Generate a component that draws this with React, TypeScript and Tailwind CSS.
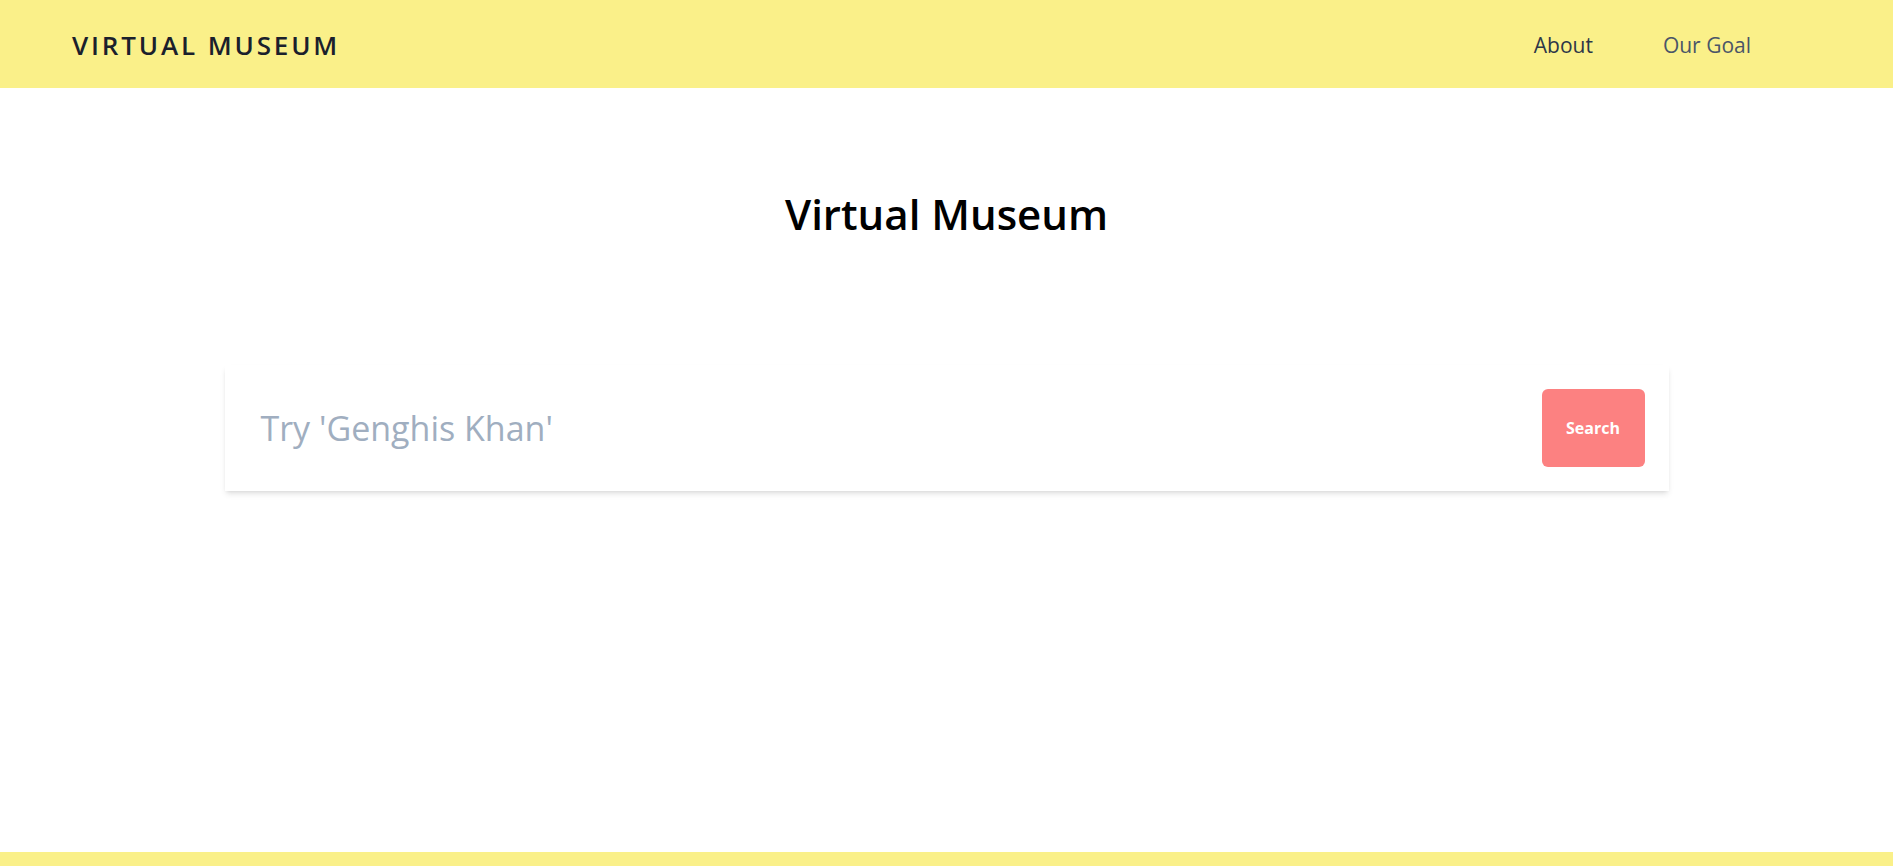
import React from "react";

export default function App() {
  return (
    <div className="min-h-[866px] flex flex-col bg-white" style={{ fontFamily: "'Open Sans', 'Noto Sans', sans-serif" }}>
      <header className="h-[88px] bg-[#faf089] flex items-center justify-between pl-[72px] pr-[142px] pt-[3px]">
        <div className="text-[26px] font-semibold tracking-[0.11em] text-[#1a202c]">VIRTUAL MUSEUM</div>
        <nav className="flex items-center gap-[70px] text-[21px] font-medium">
          <a className="text-[#2d3748]">About</a>
          <a className="text-[#4a5568]">Our Goal</a>
        </nav>
      </header>
      <main className="flex-1 flex flex-col items-center">
        <h1 className="mt-[105px] text-[42px] font-semibold text-black leading-none">Virtual Museum</h1>
        <div className="mt-[130px] w-[1444px] h-[126px] bg-white shadow-md flex items-center justify-between p-6 pl-9">
          <span className="text-[34px] text-[#a0aec0]">Try 'Genghis Khan'</span>
          <button className="w-[103px] h-[78px] rounded-md bg-[#fc8181] text-white font-bold text-[16px]">Search</button>
        </div>
      </main>
      <footer className="h-[14px] bg-[#faf089]" />
    </div>
  );
}
